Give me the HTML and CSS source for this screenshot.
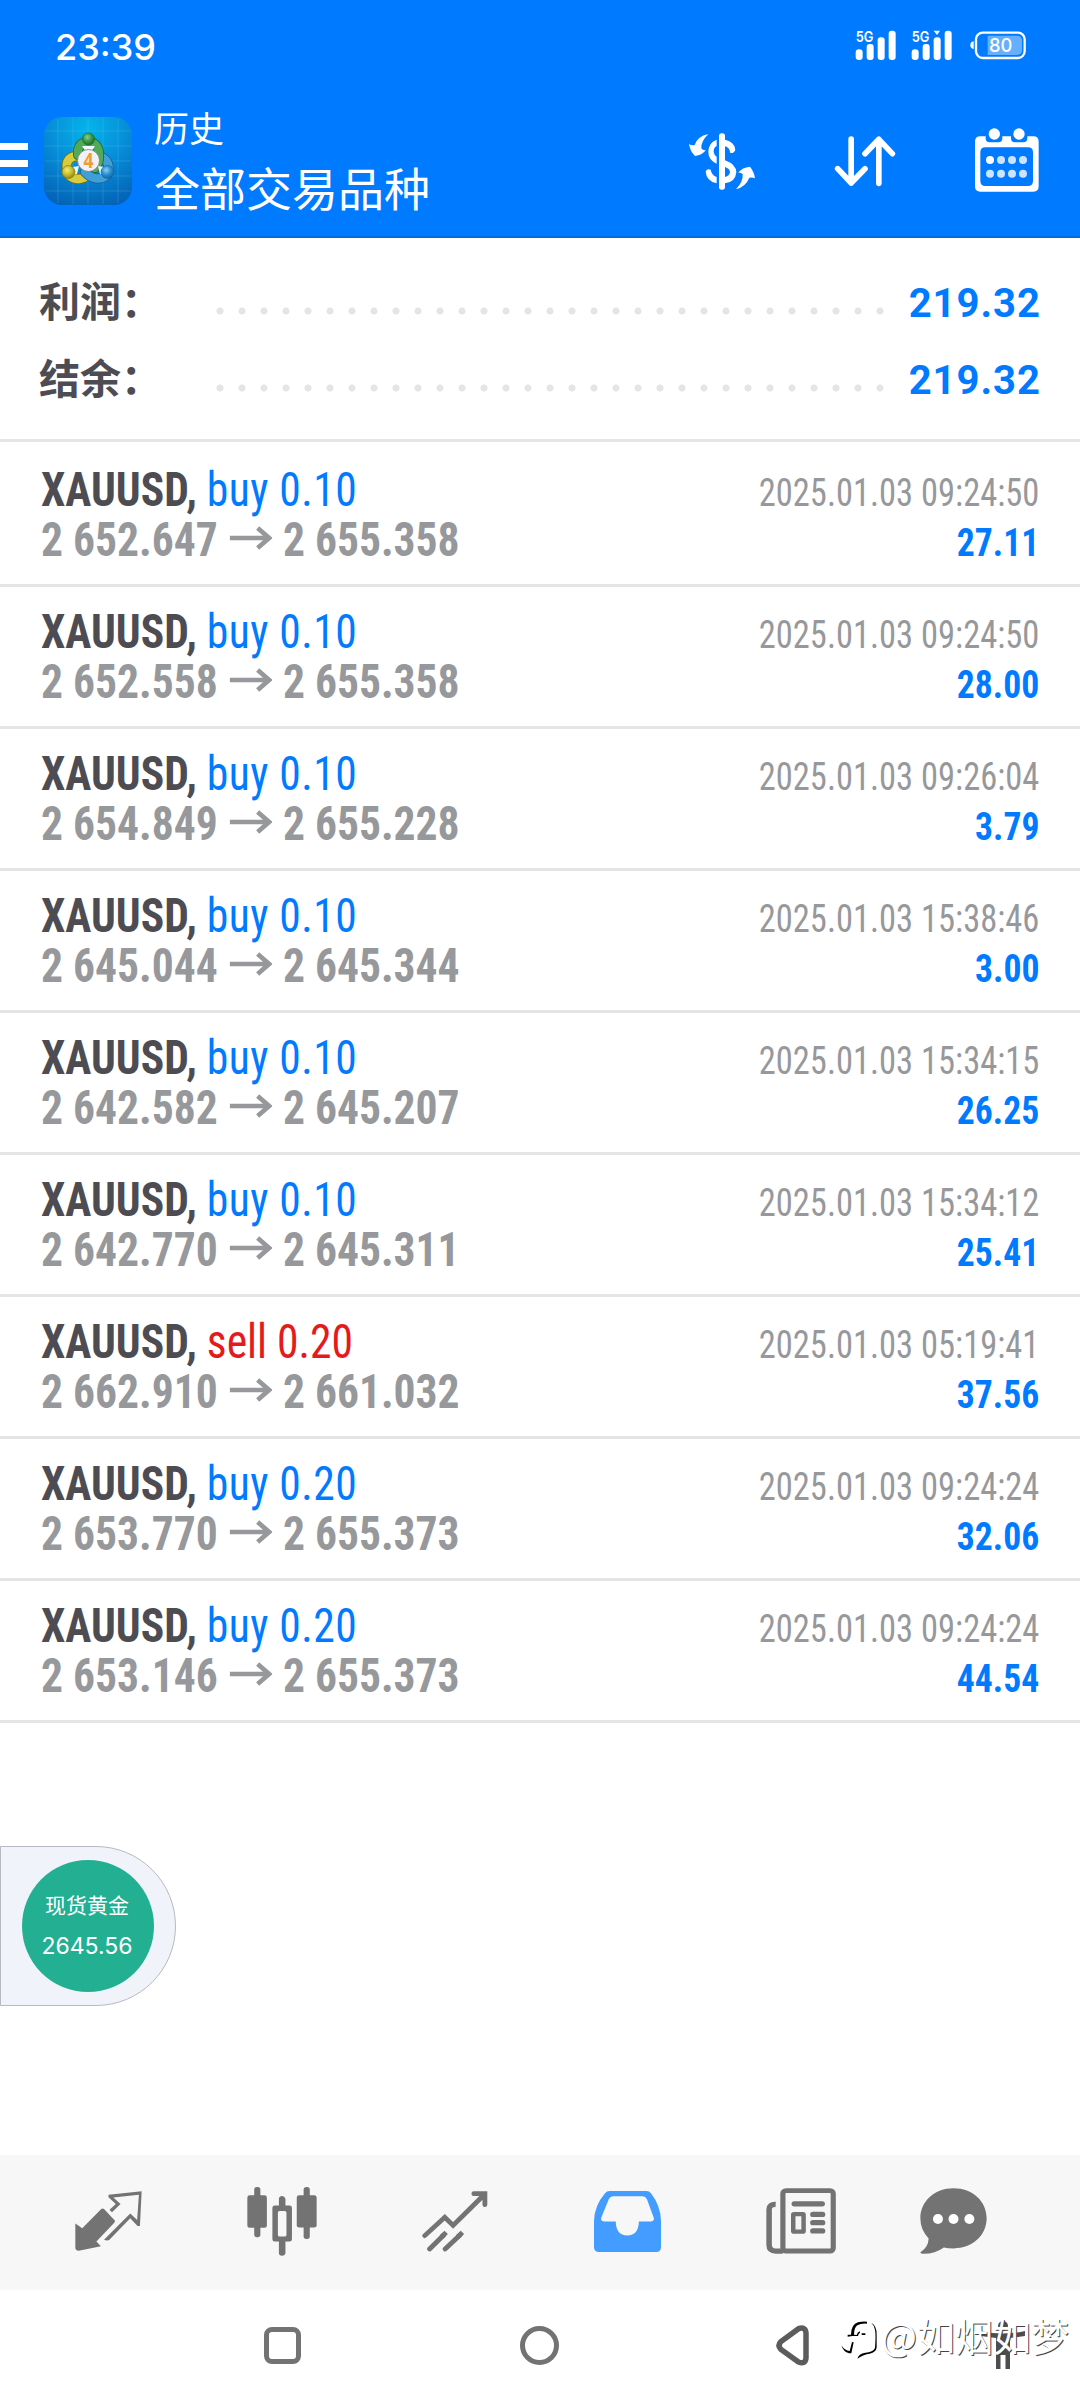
FILE: index.html
```
<!DOCTYPE html>
<html lang="zh-CN">
<head>
<meta charset="utf-8">
<title>历史</title>
<link rel="stylesheet" href="styles.css">
</head>
<body>
<header class="top">
  <div class="status">
    <span class="clock">23:39</span>
    <svg class="status-icons" viewBox="580 85 520 105" fill="#fff">
      <g font-family="Inter, sans-serif" font-weight="600" font-size="45">
        <text x="585" y="126" textLength="53" lengthAdjust="spacingAndGlyphs">5G</text>
        <text x="753" y="126" textLength="53" lengthAdjust="spacingAndGlyphs">5G</text>
      </g>
      <rect x="585" y="149" width="21" height="32" rx="10"/><rect x="618" y="133" width="21" height="48" rx="9"/><rect x="651" y="113" width="21" height="68" rx="9"/><rect x="684" y="93" width="21" height="88" rx="9"/>
      <rect x="753" y="149" width="21" height="32" rx="10"/><rect x="786" y="133" width="21" height="48" rx="9"/><rect x="819" y="113" width="21" height="68" rx="9"/><rect x="852" y="93" width="21" height="88" rx="9"/>
      <path d="M819 93H838L829 106Z"/>
      <path d="M939 125V148C932 147 929 142 929 136.500S932 126 939 125Z"/>
      <rect x="946" y="99" width="146" height="76" rx="20" fill="none" stroke="#fff" stroke-width="7"/>
      <path d="M981 108H1069Q1084 108 1084 122V152Q1084 166 1069 166H981Z" fill-opacity=".4"/>
      <text x="985" y="156" font-family="Inter, sans-serif" font-weight="500" font-size="58" textLength="70" lengthAdjust="spacingAndGlyphs">80</text>
    </svg>
  </div>
  <div class="toolbar">
    <div class="menu"><i></i><i></i><i></i></div>
    <svg class="logo" viewBox="0 0 88 88">
      <defs>
        <radialGradient id="bg" cx=".5" cy=".12" r=".95"><stop offset="0" stop-color="#04b4ea"/><stop offset=".5" stop-color="#068bd6"/><stop offset="1" stop-color="#0560b4"/></radialGradient>
        <radialGradient id="gr" cx=".4" cy=".35" r=".7"><stop offset="0" stop-color="#8fce93"/><stop offset=".5" stop-color="#3d9a48"/><stop offset="1" stop-color="#176b24"/></radialGradient>
        <radialGradient id="ye" cx=".4" cy=".35" r=".7"><stop offset="0" stop-color="#f4ec7c"/><stop offset=".5" stop-color="#cdbf2b"/><stop offset="1" stop-color="#8c8212"/></radialGradient>
        <radialGradient id="bl" cx=".4" cy=".35" r=".7"><stop offset="0" stop-color="#8bd0f3"/><stop offset=".5" stop-color="#2e90cf"/><stop offset="1" stop-color="#1262a3"/></radialGradient>
      </defs>
      <rect width="88" height="88" rx="18" fill="url(#bg)"/>
      <path d="M14 2V86M29 1V87M44 1V87M59 1V87M74 2V86M1 14H87M1 29H87M1 44H87M1 59H87M1 74H87" stroke="#7fd0ff" stroke-opacity=".2" fill="none"/>
      <g fill="none" stroke-linecap="round">
        <path d="M24 55C20 44 26 38 36 39M26 59C32 64 40 62 46 57" stroke="#77700f" stroke-width="10"/><path d="M24 55C20 44 26 38 36 39M26 59C32 64 40 62 46 57" stroke="#d8cc3c" stroke-width="8.500"/>
        <path d="M64 55C66 46 62 41 55 39M63 58C56 64 47 62 41 55" stroke="#155f98" stroke-width="10"/><path d="M64 55C66 46 62 41 55 39M63 58C56 64 47 62 41 55" stroke="#419fd8" stroke-width="8.500"/>
        <path d="M34 38C32 20 57 20 55 40Q55 46 51 51" stroke="#1a6627" stroke-width="10"/><path d="M34 38C32 20 57 20 55 40Q55 46 51 51" stroke="#51aa58" stroke-width="8.500"/>
      </g>
      <path d="M38 29H51L47 35H42ZM29 50L35 49L33 57H30ZM60 50L54 49L56 57H59Z" fill="#eefaff"/>
      <circle cx="44.500" cy="22" r="6" fill="url(#gr)" stroke="#1c6b2b" stroke-width=".7"/>
      <circle cx="24.500" cy="55" r="6.500" fill="url(#ye)" stroke="#837a12" stroke-width=".7"/>
      <circle cx="63.500" cy="55" r="6.500" fill="url(#bl)" stroke="#16639c" stroke-width=".7"/>
      <circle cx="44.500" cy="43.500" r="11" fill="#f2f2f6" stroke="#777" stroke-width=".8"/>
      <text x="44.500" y="51" text-anchor="middle" font-family="Open Sans, sans-serif" font-weight="700" font-size="21" fill="#f59a2f" textLength="10" lengthAdjust="spacingAndGlyphs">4</text>
    </svg>
    <div class="titles"><div class="title">历史</div><div class="subtitle">全部交易品种</div></div>
    <svg class="actions" viewBox="84 380 1056 198" fill="#fff">
      <rect x="177" y="399" width="18" height="169" rx="8"/>
      <path d="M170 418V437Q160 442 161 455Q162 464 170 469V490Q145 479 145 455Q146 426 170 418Z"/>
      <path d="M195 418Q225 425 226 448Q222 460 211 458Q208 440 195 438Z"/>
      <path d="M195 480Q228 492 229 516Q226 546 195 549V530Q209 527 210 515Q209 505 195 500Z"/>
      <path d="M137 514Q140 504 152 508Q155 525 170 530V549Q139 542 137 514Z"/>
      <path d="M145 401Q122 424 124 444Q130 452 138 449Q126 465 105 467Q90 452 87 431Q95 437 104 434Q112 408 145 401Z"/>
      <path d="M228 567Q250 544 248 522Q241 514 234 517Q247 501 270 499Q283 515 285 534Q277 530 268 532Q258 558 228 567Z"/>
      <g fill="none" stroke="#fff" stroke-width="17" stroke-linecap="round" stroke-linejoin="round"><path d="M573.500 416V548M533 505L573.500 548L615 505M656.500 549V417M615 460L656.500 417L697 460"/></g>
      <path fill-rule="evenodd" d="M961 408H977V414Q977 426 989 426H1015Q1027 426 1027 414V408H1053V414Q1053 426 1065 426H1090Q1102 426 1102 414V408H1120Q1136 408 1136 424V558Q1136 574 1120 574H961Q945 574 945 558V424Q945 408 961 408ZM976 441Q961 441 961 456V542Q961 557 976 557H1104Q1119 557 1119 542V456Q1119 441 1104 441Z"/>
      <circle cx="1003" cy="401" r="17"/><circle cx="1077" cy="401" r="17"/>
      <circle cx="990" cy="479" r="12"/>
      <g fill-opacity=".8"><circle cx="1023" cy="479" r="12"/><circle cx="1056" cy="479" r="12"/><circle cx="1089" cy="479" r="12"/><circle cx="990" cy="520" r="12"/><circle cx="1023" cy="520" r="12"/><circle cx="1056" cy="520" r="12"/><circle cx="1089" cy="520" r="12"/></g>
    </svg>
  </div>
</header>
<main class="content">
  <section class="summary">
    <div class="sum-row"><span class="sum-label">利润：</span><span class="dots"></span><span class="sum-value">219.32</span></div>
    <div class="sum-row"><span class="sum-label">结余：</span><span class="dots"></span><span class="sum-value">219.32</span></div>
  </section>
  <section class="deals" id="deals"></section>
</main>
<div class="gold"><div class="gold-disc"><span class="gold-name">现货黄金</span><span class="gold-price">2645.56</span></div></div>
<nav class="tabs">
  <svg width="67" height="60" viewBox="218 159 194 176" preserveAspectRatio="none"><path d="M219 254L239 268L294 212Q298 209 302 212L334 246Q334 251 329 255L280 307L293 321L229 334Q220 334 219 326Z" fill="#737373"/><path fill-rule="evenodd" d="M315 170L411 160L406 262H399L378 239L317 303Q311 306 302 302L378 225L398 244L403 170L329 178L350 197L325 221L318 214L336 197L315 177Z" fill="#737373"/></svg>
  <svg width="70" height="69" viewBox="714 143 204 206" preserveAspectRatio="none" fill="#737373"><rect x="735" y="143" width="18" height="150" rx="8"/><rect x="715" y="168" width="57" height="97" rx="7"/><rect x="879" y="143" width="18" height="155" rx="8"/><rect x="859" y="168" width="58" height="96" rx="7"/><path fill-rule="evenodd" d="M807 198V178Q808 170 816 170T826 178V198H838Q845 198 845 205V299Q845 306 838 306H826V340Q825 348 816 348T807 340V306H795Q788 306 788 299V205Q788 198 795 198ZM809 215Q804 215 804 220V286Q804 291 809 291H824Q829 291 829 286V220Q829 215 824 215Z"/></svg>
  <svg width="66" height="61" viewBox="1223 152 191 183" preserveAspectRatio="none" fill="none" stroke="#737373" stroke-width="14" stroke-linejoin="miter"><path stroke-linecap="round" d="M1231 286L1289 231L1313 255L1402 164M1373 160H1405V193"/><path stroke-linecap="round" d="M1245 326L1286 284M1290 326L1333 284"/><path d="M1279 290L1293 276M1326 290L1340 276"/></svg>
  <svg width="67" height="61" viewBox="157 152 194 182" preserveAspectRatio="none"><path fill="#439cff" fill-rule="evenodd" d="M202 152H309Q317 152 322 159Q350 196 351 242V320Q351 334 337 334H172Q157 334 157 320V242Q158 196 189 159Q194 152 202 152ZM212 168Q204 168 200 176L178 232Q175 242 186 243H220Q221 284 253 285Q286 284 287 243H322Q333 242 330 232L310 176Q306 168 298 168Z"/></svg>
  <svg width="70" height="66" viewBox="656 143 203 200" preserveAspectRatio="none" fill="none" stroke="#737373"><rect x="705" y="151" width="146" height="183" rx="9" stroke-width="15"/><path d="M684 193Q665 192 665 208V315Q665 334 684 334H705" stroke-width="16"/><path d="M738 191H819M792 223H820M792 248H820M792 273H820" stroke-width="16" stroke-linecap="round"/><rect x="735" y="222" width="30" height="53" rx="2" stroke-width="13"/></svg>
  <svg width="67" height="66" viewBox="1102 143 194 200" preserveAspectRatio="none"><path d="M1199 144C1255 144 1295 184 1295 235S1255 326 1199 326Q1184 326 1171 323Q1145 343 1109 342Q1100 341 1105 336Q1126 322 1127 296Q1103 270 1103 235C1103 184 1144 144 1199 144Z" fill="#737373"/><g fill="#fff"><ellipse cx="1154" cy="237" rx="14.500" ry="15"/><ellipse cx="1199" cy="237" rx="14.500" ry="15"/><ellipse cx="1245" cy="237" rx="14.500" ry="15"/></g></svg>
</nav>
<footer class="sysnav">
  <span class="recents"></span><span class="home"></span>
  <svg class="back" width="35" height="43" viewBox="0 0 35 43"><path d="M23.500 4.700L6 17.500Q2 21.500 6 25.500L23.500 38Q30.500 40.500 31 34V9Q30.500 2.200 23.500 4.700Z" fill="none" stroke="#5c5c5c" stroke-width="5.500"/></svg>
  <svg class="person" width="44" height="48" viewBox="0 0 44 48" fill="#4d4d4d"><circle cx="22" cy="5" r="5"/><path d="M0 10Q22 15 44 10V15L29 17V48H24.500V34H19.500V48H15V17L0 15Z"/></svg>
</footer>
<div class="watermark">
  <svg width="38" height="40" viewBox="28 46 114 120"><path d="M55 146Q38 142 32 122Q42 138 57 139L64 112L69 113L62 146Z"/><path d="M51 96V90H61Q62 58 82 53Q95 50 109 51V57Q90 56 80 62Q70 70 70 90L78 91Q80 82 88 80V84Q83 86 82 94H66ZM93 86H104V91H93ZM122 54Q138 62 138 90V128Q137 143 117 147Q100 149 80 162Q84 147 104 144Q127 143 133 130Q136 90 133 76Q131 62 122 54Z"/></svg>
  <span>@如烟如梦</span>
</div>
<script src="deals.js"></script>
</body>
</html>
```
FILE: deals.js
```
const deals = [
  ['buy', '0.10', '2 652.647', '2 655.358', '2025.01.03 09:24:50', '27.11'],
  ['buy', '0.10', '2 652.558', '2 655.358', '2025.01.03 09:24:50', '28.00'],
  ['buy', '0.10', '2 654.849', '2 655.228', '2025.01.03 09:26:04', '3.79'],
  ['buy', '0.10', '2 645.044', '2 645.344', '2025.01.03 15:38:46', '3.00'],
  ['buy', '0.10', '2 642.582', '2 645.207', '2025.01.03 15:34:15', '26.25'],
  ['buy', '0.10', '2 642.770', '2 645.311', '2025.01.03 15:34:12', '25.41'],
  ['sell', '0.20', '2 662.910', '2 661.032', '2025.01.03 05:19:41', '37.56'],
  ['buy', '0.20', '2 653.770', '2 655.373', '2025.01.03 09:24:24', '32.06'],
  ['buy', '0.20', '2 653.146', '2 655.373', '2025.01.03 09:24:24', '44.54']
];
document.getElementById('deals').innerHTML = deals.map(([side, lot, open, close, time, profit]) => `
  <article class="deal">
    <div class="line"><span class="order"><b class="symbol">XAUUSD,</b> <span class="${side}">${side} ${lot}</span></span><span class="time">${time}</span></div>
    <div class="line"><span class="prices">${open}<svg class="arrow" viewBox="0 0 43 24" preserveAspectRatio="none"><path d="M0 12H39M28 2L39.500 12L28 22" fill="none" stroke="#97989b" stroke-width="4.700"/></svg>${close}</span><span class="profit">${profit}</span></div>
  </article>`).join('');
```
FILE: styles.css
```
* { box-sizing: border-box; }
body { margin: 0; width: 1080px; height: 2400px; display: flex; flex-direction: column; background: #fff; font-family: Roboto, "Noto Sans CJK SC", sans-serif; position: relative; overflow: hidden; }
svg { display: block; flex: none; }
.top { height: 238px; background: #007aff; border-bottom: 2px solid #006be0; color: #fff; }
.status { height: 90px; padding: 28px 53px 0 55px; display: flex; justify-content: space-between; align-items: flex-start; }
.clock { font: 450 36px/38px Inter, sans-serif; }
.status-icons { width: 173.330px; height: 35px; }
.toolbar { display: flex; align-items: flex-start; }
.menu { width: 28px; margin-top: 53px; display: grid; gap: 9.500px; }
.menu i { height: 7px; background: #fff; }
.logo { width: 88px; height: 88px; margin: 27px 0 0 16px; }
.titles { margin: 10px 0 0 22px; font-family: "Noto Sans CJK SC", sans-serif; }
.title { font-size: 35px; line-height: 54px; }
.subtitle { font-size: 46px; line-height: 64px; }
.actions { width: 352px; height: 66px; margin: 37px 40px 0 auto; }
.summary { height: 204px; padding: 26px 40px 0 39px; border-bottom: 3px solid #e5e5e5; }
.sum-row { height: 77px; display: flex; align-items: center; }
.sum-label { width: 170px; height: 77px; font: 700 41px/71px "Noto Sans CJK SC", sans-serif; color: #4d4c52; }
.dots { width: 682px; height: 22px; margin-top: 17px; background: radial-gradient(circle, #e5e5e5 3.200px, transparent 3.900px) 0 0 / 22px 22px; }
.sum-value { margin: 2px -1px 0 auto; font-weight: 700; font-size: 40px; letter-spacing: 1px; color: #007aff; }
.deals { font-stretch: 75%; }
.deal { height: 142px; padding: 20px 41px 0; border-bottom: 3px solid #e5e5e5; }
.deal:first-child { height: 145px; padding-top: 23px; }
.line { height: 50px; line-height: 50px; display: flex; justify-content: space-between; align-items: baseline; font-size: 48px; }
.order, .prices { transform: scaleX(.907); transform-origin: left; }
.symbol { color: #4d4c52; font-weight: 700; }
.buy { color: #007aff; letter-spacing: .5px; }
.sell { color: #e41a1b; }
.prices { color: #97989b; font-weight: 700; }
.arrow { display: inline-block; width: 47.400px; height: 24px; margin: 0 11.500px 0 13px; vertical-align: 6px; }
.time { font-size: 39px; color: #97989b; transform: scaleX(.884); transform-origin: right; }
.profit { font-size: 39px; font-weight: 700; color: #007aff; transform: scaleX(.914); transform-origin: right; }
.gold { position: absolute; left: 0; top: 1846px; width: 176px; height: 160px; padding: 13px 0 0 21px; background: #f0f3fa; border: 1px solid #b9b9c1; border-radius: 0 80px 80px 0; }
.gold-disc { width: 132px; height: 132px; border-radius: 50%; background: #22af92; color: #fff; display: flex; flex-direction: column; align-items: center; padding: 29px 2px 0 0; }
.gold-name { font: 21px/30px "Noto Sans CJK SC", sans-serif; }
.gold-price { font: 23px/30px Inter, sans-serif; margin-top: 12px; }
.tabs { height: 135px; margin-top: auto; padding-left: 22px; background: #f7f7f7; display: grid; grid-template-columns: repeat(5, 173px) 132px; justify-items: center; align-items: center; padding-bottom: 3px; }
.sysnav { height: 110px; display: flex; padding-left: 264px; align-items: center; }
.recents { width: 37px; height: 37px; border: 5.500px solid #737373; border-radius: 8px; }
.home { width: 39px; height: 39px; border: 5px solid #737373; border-radius: 50%; margin-left: 219px; }
.back { margin-left: 216px; }
.person { margin: 0 0 0 171px; }
.watermark { position: absolute; left: 840px; top: 2310px; display: flex; align-items: center; color: #fff; font: 38px/50px "Noto Sans CJK SC", sans-serif; }
.watermark svg { margin-top: 9px; }
.watermark span { margin-left: 3px; text-shadow: 1px 1px 0 #444; }
```
